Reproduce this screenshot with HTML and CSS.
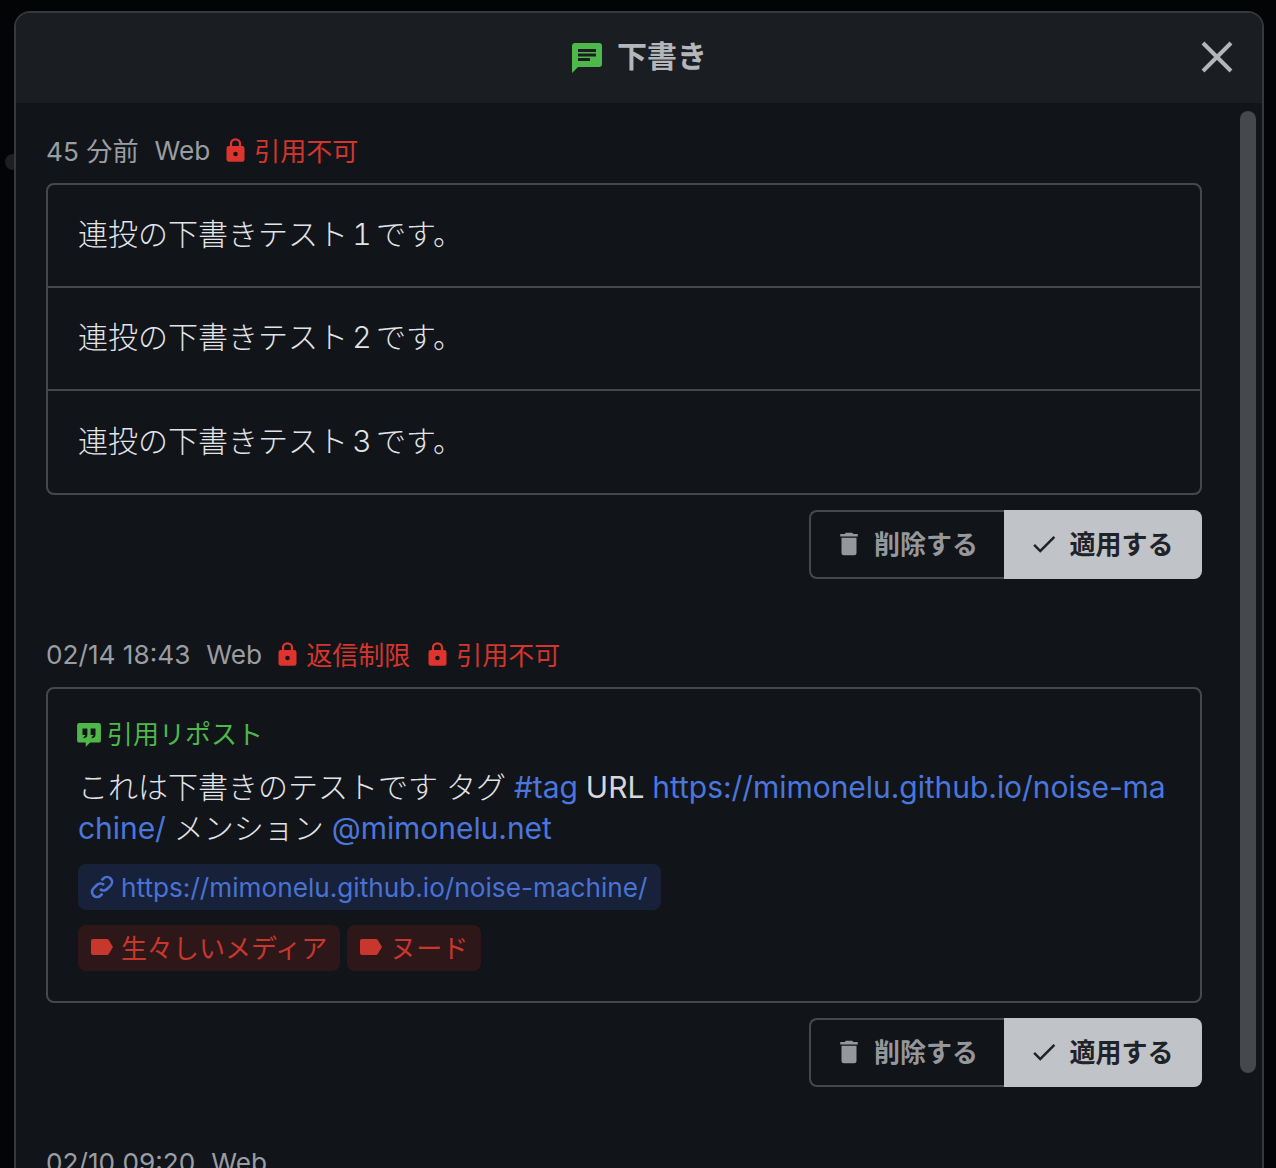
FILE: index.html
```html
<!DOCTYPE html>
<html lang="ja">
<head>
<meta charset="utf-8">
<title>下書き</title>
<link rel="stylesheet" href="styles.css">
</head>
<body>
<svg width="0" height="0" class="defs">
  <symbol id="lock" viewBox="0 0 24 24"><path d="M18 8h-1V6a5 5 0 0 0-10 0v2H6a2 2 0 0 0-2 2v10c0 1.100.9 2 2 2h12a2 2 0 0 0 2-2V10a2 2 0 0 0-2-2zM9 6a3 3 0 0 1 6 0v2H9V6zm3 11a2 2 0 1 1 0-4 2 2 0 0 1 0 4z"/></symbol>
  <symbol id="trash" viewBox="0 0 24 24"><path d="M6 19a2 2 0 0 0 2 2h8a2 2 0 0 0 2-2V7H6v12zM19 4h-3.500l-1-1h-5l-1 1H5v2h14V4z"/></symbol>
  <symbol id="check" viewBox="0 0 24 24"><path d="M9 16.200 4.800 12l-1.400 1.400L9 19 21 7l-1.400-1.400z"/></symbol>
</svg>
<div class="backdrop-dot"></div>
<main class="modal">
  <header class="modal-head">
    <svg class="head-icon" viewBox="0 0 24 24"><path d="M20 2H4a2 2 0 0 0-2 2v18l4-4h14a2 2 0 0 0 2-2V4a2 2 0 0 0-2-2zM6 9h12v2H6V9zm8 5H6v-2h8v2zm4-6H6V6h12v2z"/></svg>
    <h1 class="head-title">下書き</h1>
    <svg class="close" viewBox="0 0 32 32"><path d="M2 2 30 30M30 2 2 30"/></svg>
  </header>
  <div class="modal-body">
    <section class="draft">
      <div class="meta">
        <span>45 分前</span><span>Web</span>
        <span class="warn"><svg class="lock"><use href="#lock"/></svg>引用不可</span>
      </div>
      <div class="box">
        <div class="row">連投の下書きテスト<span class="num">1</span>です。</div>
        <div class="row">連投の下書きテスト<span class="num">2</span>です。</div>
        <div class="row">連投の下書きテスト<span class="num">3</span>です。</div>
      </div>
      <div class="actions">
        <button class="btn btn-del"><svg class="btn-icon"><use href="#trash"/></svg>削除する</button>
        <button class="btn btn-apply"><svg class="btn-icon"><use href="#check"/></svg>適用する</button>
      </div>
    </section>
    <section class="draft">
      <div class="meta">
        <span>02/14 18:43</span><span>Web</span>
        <span class="warn"><svg class="lock"><use href="#lock"/></svg>返信制限</span>
        <span class="warn"><svg class="lock"><use href="#lock"/></svg>引用不可</span>
      </div>
      <div class="box box-post">
        <div class="quote">
          <svg class="quote-icon" viewBox="0 0 24 24"><path fill-rule="evenodd" d="M3 1h18a2 2 0 0 1 2 2v14a2 2 0 0 1-2 2h-8l-4 4v-4H3a2 2 0 0 1-2-2V3a2 2 0 0 1 2-2zM6 6v6h2.500c0 1-.5 1.500-1.500 1.500V15c2 0 3.500-1.200 3.500-3.500V6H6zm7.500 0v6H16c0 1-.5 1.500-1.500 1.500V15c2 0 3.500-1.200 3.500-3.500V6h-4.500z"/></svg>
          引用リポスト
        </div>
        <p class="post-text">これは下書きのテストです タグ <a>#tag</a> <span class="latin">URL</span> <a>https://mimonelu.github.io/noise-machine/</a> メンション <a>@mimonelu.net</a></p>
        <div class="chip chip-link">
          <svg class="chip-icon link-icon" viewBox="0 0 24 24"><path d="M10 14a5 5 0 0 0 7.100 0l3.400-3.400a5 5 0 0 0-7.100-7.100l-1.900 1.900M14 10a5 5 0 0 0-7.100 0l-3.400 3.400a5 5 0 0 0 7.100 7.100l1.900-1.900"/></svg>
          https://mimonelu.github.io/noise-machine/
        </div>
        <div class="labels">
          <div class="chip chip-label"><svg class="chip-icon" viewBox="0 0 24 24"><path d="M3 4h14a2 2 0 0 1 1.600.8L23 12l-4.400 7.200a2 2 0 0 1-1.600.8H3a2 2 0 0 1-2-2V6a2 2 0 0 1 2-2z"/></svg>生々しいメディア</div>
          <div class="chip chip-label"><svg class="chip-icon" viewBox="0 0 24 24"><path d="M3 4h14a2 2 0 0 1 1.600.8L23 12l-4.400 7.200a2 2 0 0 1-1.600.8H3a2 2 0 0 1-2-2V6a2 2 0 0 1 2-2z"/></svg>ヌード</div>
        </div>
      </div>
      <div class="actions">
        <button class="btn btn-del"><svg class="btn-icon"><use href="#trash"/></svg>削除する</button>
        <button class="btn btn-apply"><svg class="btn-icon"><use href="#check"/></svg>適用する</button>
      </div>
    </section>
    <section class="draft">
      <div class="meta"><span>02/10 09:20</span><span>Web</span></div>
    </section>
  </div>
  <div class="scroll-thumb"></div>
</main>
</body>
</html>
```
FILE: styles.css
```css
* { box-sizing: border-box; }
html, body { height: 100%; }
body {
  margin: 0;
  height: 1168px;
  overflow: hidden;
  background: #030405;
  font-family: Inter, "Noto Sans CJK JP", sans-serif;
  color: #d6d8db;
  padding: 11px 12px 0 14px;
  position: relative;
}
.defs { position: absolute; }
.backdrop-dot {
  position: absolute; left: 5px; top: 154px;
  width: 16px; height: 16px; border-radius: 50%; background: #1c1e20;
}
.modal {
  position: relative;
  height: 1180px;
  background: #111419;
  border: 2px solid #35383d;
  border-radius: 16px;
  overflow: hidden;
}
.modal-head {
  height: 90px;
  padding-right: 2px;
  background: #1a1d22;
  display: flex; align-items: center; justify-content: center; gap: 12px;
  position: relative;
}
.head-icon { width: 36px; height: 36px; fill: #4fb84a; }
.head-title { margin: 0 0 4px; font-size: 30px; font-weight: 700; color: #b4b6ba; line-height: 1; }
.close {
  position: absolute; right: 29px; top: 28px;
  width: 32px; height: 32px; stroke: #b3b5b9; stroke-width: 4; fill: none;
}
.modal-body { padding: 28px 60px 0 30px; }
.draft { margin-bottom: 56px; }
.meta {
  display: flex; align-items: center; gap: 16px;
  height: 38px; margin-bottom: 14px;
  font-size: 26.2px; color: #9a9da2;
}
.warn { display: inline-flex; align-items: center; gap: 5px; margin-left: -4px; padding-bottom: 2px; font-size: 26px; color: #d5352c; }
.warn + .warn { margin-left: -2px; }
.lock { width: 27px; height: 27px; margin-top: 2px; fill: #dd352e; }
.box {
  border: 2px solid #45484d; border-radius: 8px;
}
.row {
  height: 103px; display: flex; align-items: center;
  padding: 0 30px 2px; font-size: 30px; line-height: 41px; font-weight: 300; color: #e2e4e7;
  border-bottom: 2px solid #45484d;
}
.row:last-child { border-bottom: 0; height: 102px; }
.num { width: 28px; text-align: center; font-variant-numeric: tabular-nums; }
.box-post { padding: 26px 24px 30px 30px; }
.quote {
  display: flex; align-items: center; gap: 5px;
  font-size: 26px; line-height: 40px; color: #4fb84a;
}
.quote-icon { width: 26px; height: 26px; margin-left: -2px; fill: #4fb84a; }
.post-text {
  margin: 12px 0 15px; font-size: 30px; line-height: 41px; font-weight: 300; word-spacing: -0.5px;
  color: #e2e4e7; overflow-wrap: anywhere; word-break: break-all;
}
.post-text a { color: #4a76dd; font-weight: 400; letter-spacing: -0.05px; }
.latin { font-weight: 400; color: #d6d8db; }
.chip {
  display: inline-flex; align-items: center; gap: 7px;
  height: 46px; padding: 0 13px 0 12px; border-radius: 8px;
  font-size: 26px;
}
.chip-icon { width: 24px; height: 24px; flex: none; }
.chip-link { background: #17213a; color: #4a72d4; font-size: 26.2px; vertical-align: top; }
.link-icon { fill: none; stroke: #4a72d4; stroke-width: 2.600; }
.labels { display: flex; gap: 7px; margin-top: 15px; }
.chip-label { background: #2e1718; color: #c7372d; padding-bottom: 3px; }
.chip-label .chip-icon { fill: #c7372d; }
.actions { display: flex; justify-content: flex-end; margin-top: 15px; }
.btn {
  display: flex; align-items: center; justify-content: center; gap: 10px;
  height: 69px; font: 700 26px Inter, "Noto Sans CJK JP", sans-serif;
  border-radius: 8px; padding: 0 3px 5px 0;
}
.btn-icon { width: 30px; height: 30px; margin-top: 4px; fill: currentColor; }
.btn-del {
  width: 195px; background: transparent; color: #94979c;
  border: 2px solid #45484d; border-right: 0;
  border-top-right-radius: 0; border-bottom-right-radius: 0;
}
.btn-apply {
  width: 198px; background: #c0c3c8; color: #1f2227; border: 0;
  border-top-left-radius: 0; border-bottom-left-radius: 0;
}
.scroll-thumb {
  position: absolute; right: 6px; top: 98px;
  width: 16px; height: 962px; border-radius: 8px; background: #45484c;
}
```
